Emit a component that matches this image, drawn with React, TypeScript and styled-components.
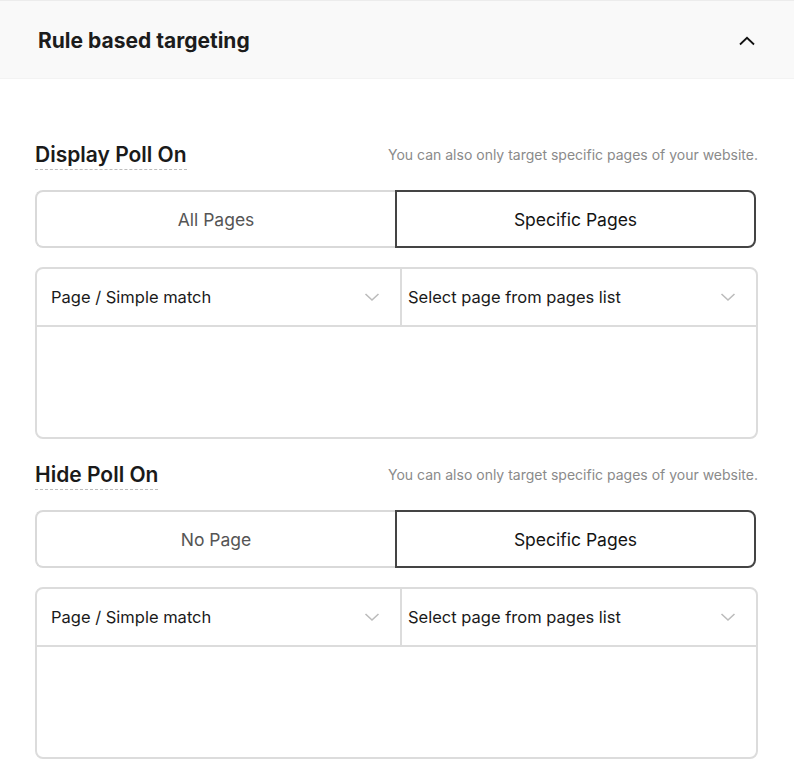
import styled, { createGlobalStyle } from 'styled-components';

const GlobalStyle = createGlobalStyle`
  body {
    margin: 0;
    background: #ffffff;
    font-family: Inter, "Liberation Sans", sans-serif;
    color: #1a1a1a;
  }
`

const Panel = styled.div`
  width: 794px;
  border-top: 1px solid #ececec;
`

const PanelHeader = styled.div`
  display: flex;
  align-items: center;
  justify-content: space-between;
  height: 78px;
  padding: 2px 38px 0;
  box-sizing: border-box;
  background: #f9f9f9;
  border-bottom: 1px solid #f3f3f3;
`

const PanelTitle = styled.h2`
  margin: 0;
  font-size: 21px;
  font-weight: 700;
  color: #1c1c1c;
`

const PanelBody = styled.div`
  display: flex;
  flex-direction: column;
  padding: 64px 36px 0 35px;
`

const Section = styled.section`
  display: flex;
  flex-direction: column;
  margin-bottom: 24px;
`

const SectionHead = styled.div`
  display: flex;
  align-items: flex-end;
  justify-content: space-between;
  margin-bottom: 20px;
`

const SectionTitle = styled.h3`
  margin: 0;
  padding-bottom: 2px;
  font-size: 21px;
  line-height: 24px;
  font-weight: 600;
  color: #1a1a1a;
  border-bottom: 1px dashed #bdbdbd;
`

const Hint = styled.span`
  font-size: 14px;
  line-height: 20px;
  color: #8a8a8a;
  margin-bottom: 5px;
`

const Toggle = styled.div`
  display: grid;
  grid-template-columns: 360px 1fr;
  height: 58px;
  margin-right: 2px;
  margin-bottom: 19px;
`

const ToggleButton = styled.button<{ $active?: boolean }>`
  font-family: inherit;
  font-size: 17.5px;
  background: #ffffff;
  cursor: pointer;
  color: ${p => (p.$active ? '#141414' : '#555555')};
  border: 2px solid ${p => (p.$active ? '#444444' : '#d9d9d9')};
  border-right-width: ${p => (p.$active ? '2px' : '0')};
  border-radius: ${p => (p.$active ? '0 8px 8px 0' : '8px 0 0 8px')};
`

const RuleBox = styled.div`
  display: flex;
  flex-direction: column;
  height: 172px;
  border: 2px solid #dcdcdc;
  border-radius: 8px;
  box-sizing: border-box;
`

const RuleRow = styled.div`
  display: grid;
  grid-template-columns: 363px 1fr;
  height: 56px;
  border-bottom: 2px solid #dcdcdc;
`

const SelectField = styled.div<{ $pad: number }>`
  display: flex;
  align-items: center;
  justify-content: space-between;
  padding: 0 20px 0 ${p => p.$pad}px;
  font-size: 16.5px;
  color: #1a1a1a;
  & + & {
    border-left: 2px solid #dcdcdc;
  }
`

const ChevronUp = () => (
  <svg width="18" height="10" viewBox="0 0 18 10" fill="none">
    <path d="M2 8.5L9 1.8L16 8.5" stroke="#111" strokeWidth="1.8" />
  </svg>
)

const ChevronDown = () => (
  <svg width="16" height="10" viewBox="0 0 16 10" fill="none">
    <path d="M1.5 2L8 8L14.5 2" stroke="#bcbcbc" strokeWidth="1.6" />
  </svg>
)

type Rule = { title: string; first: string }

const rules: Rule[] = [
  { title: 'Display Poll On', first: 'All Pages' },
  { title: 'Hide Poll On', first: 'No Page' },
]

function App() {
  return (
    <>
      <GlobalStyle />
      <Panel>
        <PanelHeader>
          <PanelTitle>Rule based targeting</PanelTitle>
          <ChevronUp />
        </PanelHeader>
        <PanelBody>
          {rules.map(rule => (
            <Section key={rule.title}>
              <SectionHead>
                <SectionTitle>{rule.title}</SectionTitle>
                <Hint>You can also only target specific pages of your website.</Hint>
              </SectionHead>
              <Toggle>
                <ToggleButton>{rule.first}</ToggleButton>
                <ToggleButton $active>Specific Pages</ToggleButton>
              </Toggle>
              <RuleBox>
                <RuleRow>
                  <SelectField $pad={14}>
                    Page / Simple match
                    <ChevronDown />
                  </SelectField>
                  <SelectField $pad={6}>
                    Select page from pages list
                    <ChevronDown />
                  </SelectField>
                </RuleRow>
              </RuleBox>
            </Section>
          ))}
        </PanelBody>
      </Panel>
    </>
  );
}

export default App;
